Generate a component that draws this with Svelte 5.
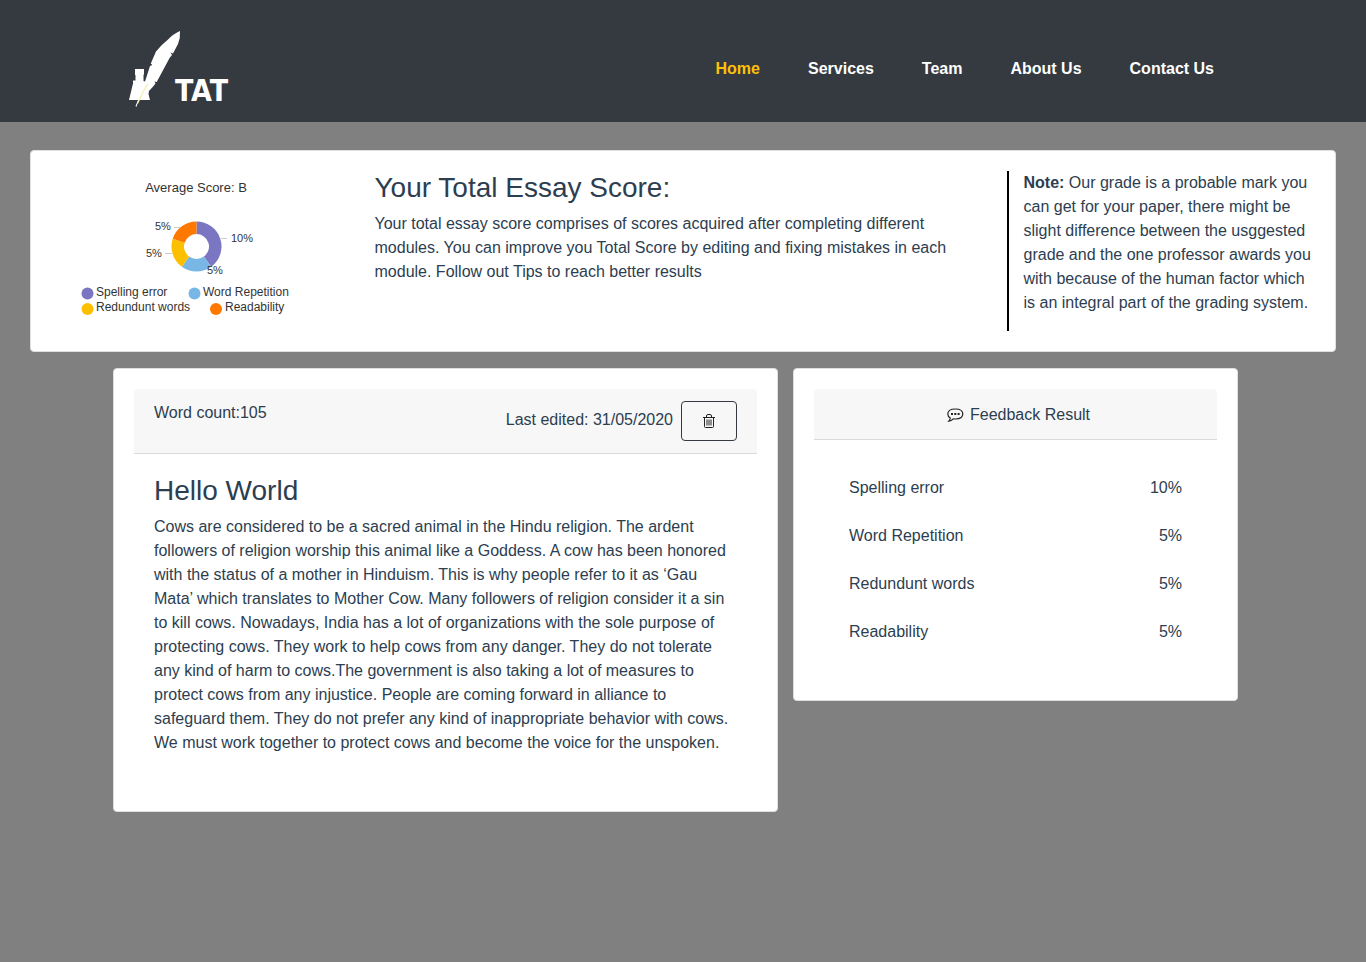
<script>
  const links = ['Home', 'Services', 'Team', 'About Us', 'Contact Us'];

  const modules = [
    { name: 'Spelling error', value: 10, color: '#7b76c2', dot: [36.5, 122.5], text: [45, 125], label: [180, 71], tick: 'M170 67.500h6' },
    { name: 'Word Repetition', value: 5, color: '#78b7e5', dot: [143.5, 122.5], text: [152, 125], label: [156, 103], tick: '' },
    { name: 'Redundunt words', value: 5, color: '#fdc000', dot: [36.5, 138], text: [45, 140], label: [95, 86], tick: 'M114 82.500h7' },
    { name: 'Readability', value: 5, color: '#ff7800', dot: [165, 138], text: [174, 140], label: [104, 59], tick: 'M123 56.500h6' }
  ];

  const total = modules.reduce((sum, m) => sum + m.value, 0);
  const cx = 145.5;
  const cy = 75.5;

  function point(fraction, r) {
    const a = fraction * Math.PI * 2;
    return `${(cx + r * Math.sin(a)).toFixed(2)} ${(cy - r * Math.cos(a)).toFixed(2)}`;
  }

  function slice(i) {
    const start = modules.slice(0, i).reduce((sum, m) => sum + m.value, 0) / total;
    const end = start + modules[i].value / total;
    return `M${point(start, 25)}A25 25 0 0 1 ${point(end, 25)}L${point(end, 12.5)}A12.5 12.5 0 0 0 ${point(start, 12.5)}Z`;
  }
</script>

<header class="topbar">
  <div class="container topbar-inner">
    <a class="brand" href="#home" aria-label="TAT home">
      <svg width="104" height="80" viewBox="0 0 104 80" aria-hidden="true">
        <path fill="#fff" d="M52 2Q52.500 9 50 15L45 24.500L42.500 23.500L44 26L41.700 28.700L28.700 53L26.500 52.500L27.500 54.500L24.700 58L21 62L20.500 65L22 71H11L8.300 78L7.500 77L10 71H1L5 54.500V51.500H7.500V46H7V40H16V45.500H15.500V52L17 52.500L22 37L24.300 36L22.800 34.500L28 22.500Q33 16 39.500 11Q45 5 52 2z" />
        <path d="M20 54.500L15.500 62L9.500 74.500" fill="none" stroke="#f3efb0" stroke-width="1.300" />
        <text class="brand-text" x="47" y="72">TAT</text>
      </svg>
    </a>
    <nav>
      {#each links as link, i}
        <a href="#{link.toLowerCase().replace(' ', '-')}" class:active={i === 0}>{link}</a>
      {/each}
    </nav>
  </div>
</header>

<main>
  <section class="card summary">
    <div class="col chart">
      <svg width="290" height="160" viewBox="0 0 290 160" role="img" aria-label="Average score chart">
        <text class="chart-title" x="145" y="21" text-anchor="middle">Average Score: B</text>
        {#each modules as m, i}
          <path d={slice(i)} fill={m.color} />
          <path d={m.tick} stroke="#ccc" fill="none" />
          <circle cx={m.dot[0]} cy={m.dot[1]} r="6" fill={m.color} />
          <text class="chart-legend" x={m.text[0]} y={m.text[1]}>{m.name}</text>
        {/each}
        {#each modules as m}
          <text class="chart-label" x={m.label[0]} y={m.label[1]}>{m.value}%</text>
        {/each}
      </svg>
    </div>
    <div class="col">
      <h3>Your Total Essay Score:</h3>
      <p>Your total essay score comprises of scores acquired after completing different modules. You can improve you Total Score by editing and fixing mistakes in each module. Follow out Tips to reach better results</p>
    </div>
    <div class="col note">
      <p><strong>Note:</strong> Our grade is a probable mark you can get for your paper, there might be slight difference between the usggested grade and the one professor awards you with because of the human factor which is an integral part of the grading system.</p>
    </div>
  </section>

  <div class="container columns">
    <article class="card">
      <div class="card-header essay-header">
        <span>Word count:105</span>
        <div class="edited">
          <span>Last edited: 31/05/2020</span>
          <button type="button" aria-label="Delete essay">
            <svg width="16" height="16" viewBox="0 0 16 16" fill="none" stroke="#222" aria-hidden="true">
              <path d="M2 4.500h12M3.500 4.500v9q0 1 1 1h7q1 0 1-1v-9M5.500 4V3q0-1.500 1.500-1.500h2q1.500 0 1.500 1.500v1" />
              <path d="M6 6.500v6M8 6.500v6M10 6.500v6" />
            </svg>
          </button>
        </div>
      </div>
      <div class="card-content">
        <h3>Hello World</h3>
        <p>Cows are considered to be a sacred animal in the Hindu religion. The ardent followers of religion worship this animal like a Goddess. A cow has been honored with the status of a mother in Hinduism. This is why people refer to it as ‘Gau Mata’ which translates to Mother Cow. Many followers of religion consider it a sin to kill cows. Nowadays, India has a lot of organizations with the sole purpose of protecting cows. They work to help cows from any danger. They do not tolerate any kind of harm to cows.The government is also taking a lot of measures to protect cows from any injustice. People are coming forward in alliance to safeguard them. They do not prefer any kind of inappropriate behavior with cows. We must work together to protect cows and become the voice for the unspoken.</p>
      </div>
    </article>

    <aside class="card">
      <div class="card-header feedback-header">
        <svg width="17" height="16" viewBox="1 0 17 16" fill="none" stroke="#222" aria-hidden="true">
          <path stroke-width="1.200" d="M9.300 2c4.500 0 7.500 2 7.500 5S13.800 12 9.300 12q-1 0-2-.2Q5.300 13.900 2.800 14.200q1.300-1.500 1.500-3.200Q1.800 9.500 1.800 7C1.800 4 4.800 2 9.300 2z" />
          <path d="M5 7h2M8.300 7h2M11.600 7h2" stroke-width="2" />
        </svg>
        <span>Feedback Result</span>
      </div>
      <table>
        <tbody>
          {#each modules as m}
            <tr><th scope="row">{m.name}</th><td>{m.value}%</td></tr>
          {/each}
        </tbody>
      </table>
    </aside>
  </div>
</main>

<style>
  :global(body) {
    margin: 0;
    background: #808080;
    color: #2c3e50;
    font: 16px/24px "Liberation Sans", Arial, sans-serif;
    -webkit-font-smoothing: antialiased;
  }
  :global(*) { box-sizing: border-box; }
  .container {
    max-width: 1140px;
    margin: 0 auto;
    padding: 0 15px;
  }
  .topbar { background: #343a40; padding: 29px 0 13px; }
  .topbar-inner { display: flex; justify-content: space-between; align-items: center; }
  .brand svg { display: block; }
  .brand-text { font: bold 30px "DejaVu Sans Condensed", "DejaVu Sans", sans-serif; fill: #fff; }
  nav { display: flex; gap: 48px; padding-right: 24px; }
  nav a { color: #fff; font-weight: bold; text-decoration: none; }
  nav a.active { color: #ffc107; }
  .card {
    background: #fff;
    border: 1px solid #dfdfdf;
    border-radius: 4px;
    padding: 20px;
  }
  main { padding: 28px 30px; }
  .summary { display: grid; grid-template-columns: 1fr 2fr 1fr; padding: 20px 5px; }
  .col { padding: 0 15px; min-width: 0; }
  .note { border-left: 2px solid #000; }
  .chart svg { display: block; max-width: 100%; }
  .chart text { fill: #333; }
  .chart-title { font-size: 13px; }
  .chart-legend { font-size: 12px; }
  .chart-label { font-size: 11px; }
  h3 { margin: 0 0 8px; font-size: 28px; line-height: 33px; font-weight: 400; }
  p { margin: 0 0 16px; }
  .columns {
    display: grid;
    grid-template-columns: 665fr 445fr;
    gap: 15px;
    align-items: start;
    margin-top: 16px;
    padding: 0 15px 0 0;
  }
  .card-header {
    display: flex;
    padding: 12px 20px;
    background: #f7f7f7;
    border-bottom: 1px solid #dadada;
    border-radius: 4px 4px 0 0;
  }
  .essay-header { justify-content: space-between; }
  .edited { display: flex; gap: 8px; line-height: 38px; }
  button {
    width: 56px;
    height: 40px;
    padding: 0;
    display: grid;
    place-items: center;
    background: transparent;
    border: 1px solid #343a40;
    border-radius: 4px;
  }
  .card-content { padding: 20px; }
  .feedback-header {
    justify-content: center;
    align-items: center;
    gap: 6px;
    padding: 13px 20px 11px 26px;
    line-height: 26px;
  }
  table { width: 100%; border-collapse: separate; border-spacing: 0; padding: 24px 35px; }
  th, td { padding: 12px 0; font-weight: 400; text-align: left; }
  td { text-align: right; }
  @media (max-width: 900px) {
    .summary, .columns { grid-template-columns: 1fr; }
    .topbar-inner { flex-wrap: wrap; }
    nav { gap: 24px; flex-wrap: wrap; }
  }
</style>
